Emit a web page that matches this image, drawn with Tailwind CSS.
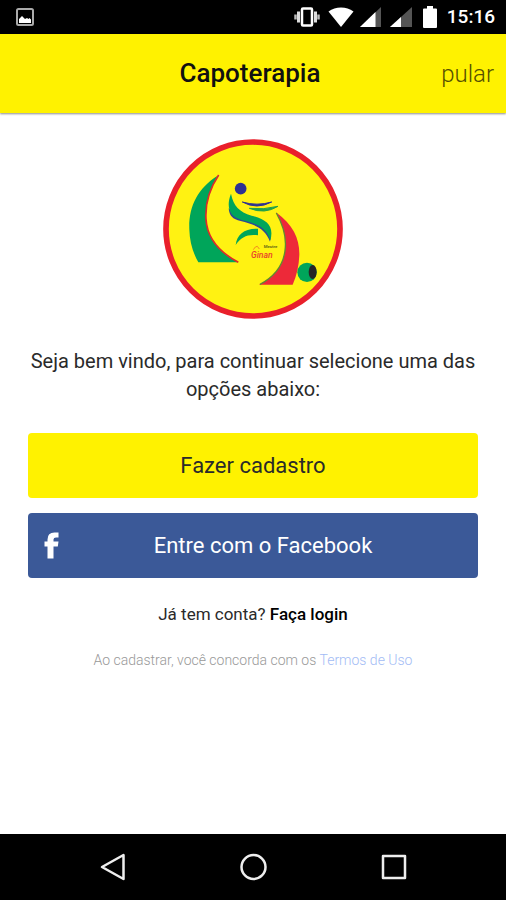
<!DOCTYPE html>
<html lang="pt-BR">
<head>
    <meta charset="UTF-8">
    <meta name="viewport" content="width=device-width, initial-scale=1.0">
    <title>Capoterapia</title>

    <!-- Tailwind CSS -->
    <script src="https://cdn.jsdelivr.net/npm/@tailwindcss/browser@4"></script>
</head>
<body class="min-h-screen flex flex-col bg-white font-[Roboto,sans-serif] text-[#2a2a2a]">
    <!-- Status bar -->
    <div class="h-[34px] shrink-0 flex items-center justify-between bg-black text-white pl-4 pr-[11px]">
        <svg class="w-[18px] h-[18px]" viewBox="0 0 18 18" fill="none">
            <rect x="1" y="1" width="16" height="16" rx="1.5" stroke="#aaa" stroke-width="2"/>
            <path d="M3 15V11l3-3 3 3 2-1 1.500 1 1-1 1.500 1.500V15z" fill="#fff"/>
        </svg>
        <div class="flex items-center">
            <!-- Vibrate -->
            <svg class="w-[26px] h-5 mr-2" viewBox="0 0 26 20" fill="none">
                <rect x="8" y="1.500" width="10" height="17" rx="1" stroke="#fff" stroke-width="2.500"/>
                <path d="M4.500 4.500v11M21.500 4.500v11" stroke="#ddd" stroke-width="3"/>
                <path d="M1.500 7.500v5M24.500 7.500v5" stroke="#bbb" stroke-width="2.500"/>
            </svg>
            <!-- Wi-Fi -->
            <svg class="w-[26px] h-5 mr-[6px]" viewBox="0 0 26 20" fill="#fff">
                <path d="M0.500 4.500Q6 0.500 13 0.500T25.500 4.500L13 20z"/>
            </svg>
            <!-- Signal -->
            <svg class="w-[21px] h-5 mr-[9px]" viewBox="0 0 21 20">
                <path d="M0 20 21 0V20z" fill="#555"/>
                <path d="M0 20 15.500 5V20z" fill="#fff"/>
            </svg>
            <svg class="w-[22px] h-5 mr-[11px]" viewBox="0 0 22 20">
                <path d="M0 20 22 0V20z" fill="#555"/>
                <path d="M0 20 11 10V20z" fill="#fff"/>
            </svg>
            <!-- Battery -->
            <svg class="w-[14px] h-[22px] mr-[10px]" viewBox="0 0 14 22" fill="#fff">
                <path d="M4 0h6v2.500h3q1 0 1 1V21q0 1-1 1H1q-1 0-1-1V3.500q0-1 1-1h3z"/>
            </svg>
            <span class="text-[19px] leading-6 font-medium">15:16</span>
        </div>
    </div>

    <!-- Header -->
    <header class="relative h-[79px] shrink-0 flex items-center justify-center bg-[#fff200] shadow-[0_1px_2px_rgba(0,0,0,0.45)]">
        <h1 class="text-[26px] leading-8 font-medium text-[#111] pr-[6px] pb-[2px]">Capoterapia</h1>
        <a href="#" class="absolute right-3 text-[24px] leading-8 font-light text-[#555000]">pular</a>
    </header>

    <!-- Main content -->
    <main class="flex-1 flex flex-col px-7 pt-[26px]">
        <svg class="w-[180px] h-[180px] mx-auto" viewBox="26 28 540 540" fill="none" role="img" aria-label="Capoterapia">
            <circle cx="296" cy="298" r="261" fill="#fff212" stroke="#e9202b" stroke-width="17"/>
            <!-- Green sail -->
            <path d="M190 138C128 176 102 235 105 300c1 35 10 68 27 98H250C190 365 157 322 155 268c-1-50 12-88 35-130z" fill="#00a55a"/>
            <path d="M193 136C165 178 152 218 155 268c3 54 37 98 97 130" stroke="#dd2a2a" stroke-width="5"/>
            <!-- Figure -->
            <circle cx="259" cy="177" r="17.500" fill="#2e3192"/>
            <path d="M264 217q44 13 88 0-45 24-88 0z" fill="#2e3192" stroke="#2e3192" stroke-width="3"/>
            <path d="M285 236q42 5 86-6-40 25-86 6z" fill="#1fa14a" stroke="#1fa14a" stroke-width="3"/>
            <path d="M223 236c2 24 12 32 36 38 36 10 72 18 88 62l2-10c-12-40-50-54-95-67z" fill="#2e4a92"/>
            <path d="M230 192c8 38 24 54 62 66 46 12 68 30 56 74-14-44-50-52-88-62-38-10-44-42-30-78z" fill="#00a55a"/>
            <path d="M244 346c4-32 26-50 67-49v20c-32-4-50 5-67 29z" fill="#00a55a"/>
            <!-- Signature -->
            <path d="M297 360q6-11 12-10l6 8" stroke="#f28a20" stroke-width="3"/>
            <text x="328" y="355" font-family="Roboto, sans-serif" font-size="13" font-weight="700" fill="#6b6b16">Mestre</text>
            <text x="290" y="384" font-family="Roboto, sans-serif" font-size="26" font-style="italic" font-weight="500" fill="#e9452b">Ginan</text>
            <!-- Red sail -->
            <path d="M365 248c52 38 71 80 70 128-1 32-8 62-20 89H314c49-26 76-60 79-112 2-39-9-70-28-105z" fill="#ed2939"/>
            <path d="M366 250c19 34 30 64 27 103-3 50-31 87-76 111" stroke="#5f8c31" stroke-width="4"/>
            <!-- Ball -->
            <circle cx="458" cy="428" r="29" fill="#00a55a"/>
            <ellipse cx="475" cy="427" rx="12" ry="21" fill="#262626"/>
        </svg>

        <p class="mt-7 text-center text-[20px] leading-7">Seja bem vindo, para continuar selecione uma das opções abaixo:</p>

        <div class="mt-[30px] flex flex-col gap-[15px]">
            <button type="button" class="h-[65px] rounded bg-[#fff200] text-[22px] leading-7">Fazer cadastro</button>
            <button type="button" class="relative h-[65px] rounded bg-[#3b5998] text-[22px] leading-7 text-white pl-[20px]">
                <svg class="absolute left-4 top-[19px] w-[15px] h-[27px]" viewBox="0 0 15 27" fill="#fff">
                    <path d="M3.500 26.500V14.500H0.500V9.500H3.500V7.500Q3.500 0.500 10.500 0.500h4v5h-2.500Q9.500 5.500 9.500 7.500v2h5l-0.700 5H9.500V26.500z"/>
                </svg>
                Entre com o Facebook
            </button>
        </div>

        <p class="mt-6 text-center text-[17px] leading-6">Já tem conta? <a href="#" class="font-medium text-black">Faça login</a></p>
        <p class="mt-6 text-center text-[14px] leading-5 font-light text-[#999]">Ao cadastrar, você concorda com os <a href="#" class="text-[#a3bcf5]">Termos de Uso</a></p>
    </main>

    <!-- Navigation bar -->
    <nav class="h-[66px] shrink-0 flex items-center justify-center gap-[108px] bg-black">
        <button type="button" aria-label="Voltar">
            <svg class="size-8" viewBox="0 0 32 32" fill="none" stroke="#eee" stroke-width="2.500" stroke-linejoin="round"><path d="M5 16 26.500 4V28z"/></svg>
        </button>
        <button type="button" aria-label="Início">
            <svg class="size-8" viewBox="0 0 32 32" fill="none" stroke="#eee" stroke-width="2.500"><circle cx="16.500" cy="16" r="12"/></svg>
        </button>
        <button type="button" aria-label="Recentes">
            <svg class="size-8" viewBox="0 0 32 32" fill="none" stroke="#eee" stroke-width="2.500" stroke-linejoin="round"><rect x="6" y="5" width="22" height="22"/></svg>
        </button>
    </nav>
</body>
</html>
